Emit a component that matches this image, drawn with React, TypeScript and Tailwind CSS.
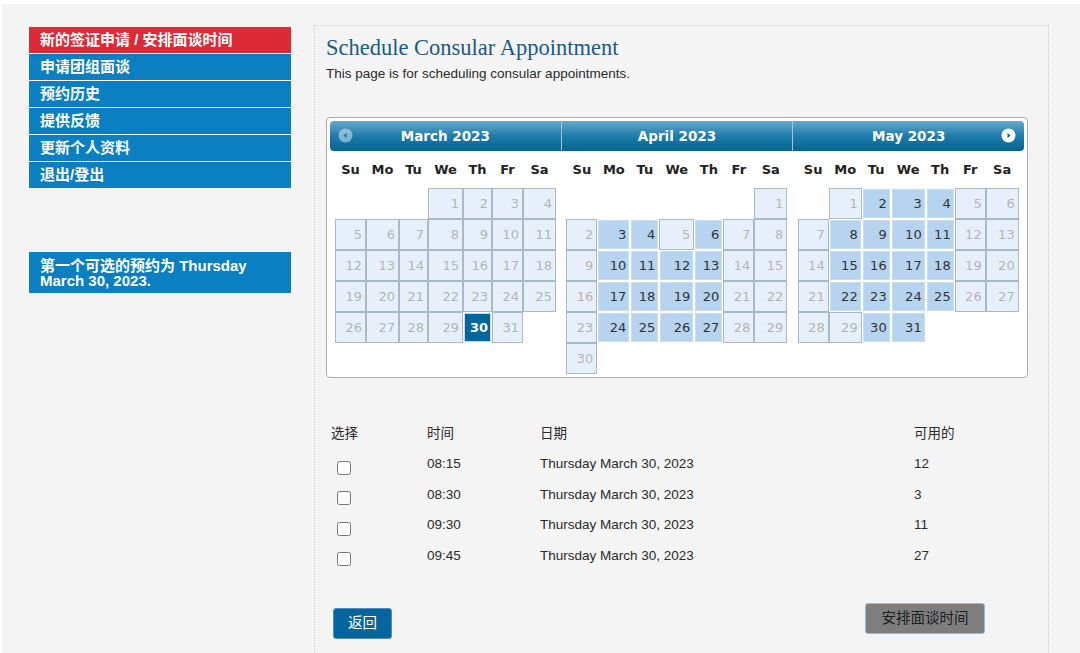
import React from 'react';

type DayState = 'off' | 'on' | 'sel';

interface Month {
  title: string;
  start: number; // weekday of the 1st, 0 = Sunday
  days: number;
  open: number[];
  selected?: number;
}

const COLS = [31, 33, 29, 35, 29, 31, 33];
const DOW = ['Su', 'Mo', 'Tu', 'We', 'Th', 'Fr', 'Sa'];

const MONTHS: Month[] = [
  { title: 'March 2023', start: 3, days: 31, open: [], selected: 30 },
  {
    title: 'April 2023',
    start: 6,
    days: 30,
    open: [3, 4, 6, 10, 11, 12, 13, 17, 18, 19, 20, 24, 25, 26, 27],
  },
  {
    title: 'May 2023',
    start: 1,
    days: 31,
    open: [2, 3, 4, 8, 9, 10, 11, 15, 16, 17, 18, 22, 23, 24, 25, 30, 31],
  },
];

const MENU = ['新的签证申请 / 安排面谈时间', '申请团组面谈', '预约历史', '提供反馈', '更新个人资料', '退出/登出'];

const SLOTS = [
  { time: '08:15', avail: '12' },
  { time: '08:30', avail: '3' },
  { time: '09:30', avail: '11' },
  { time: '09:45', avail: '27' },
];

function Day({ d, state, w }: { d: number; state: DayState; w: number }) {
  if (state === 'off') {
    return (
      <div
        style={{ width: w }}
        className="flex h-[31px] items-center justify-end border border-[#a8bac4] bg-[#e7f0fa] pr-[3px] text-[#b5b5b5]"
      >
        {d}
      </div>
    );
  }
  const inner =
    state === 'sel'
      ? 'border-[#d6d6d6] bg-[#03679c] font-bold text-white'
      : 'border-[#c8ddef] bg-[#b6d4ef] text-[#333]';
  return (
    <div style={{ width: w }} className="h-[31px] p-[1px]">
      <div className={`flex h-full items-center justify-end border pr-[2px] ${inner}`}>{d}</div>
    </div>
  );
}

function MonthGrid({ m }: { m: Month }) {
  const cells: (number | null)[] = [];
  for (let i = 0; i < m.start; i++) cells.push(null);
  for (let d = 1; d <= m.days; d++) cells.push(d);
  while (cells.length % 7) cells.push(null);
  const rows: (number | null)[][] = [];
  for (let i = 0; i < cells.length; i += 7) rows.push(cells.slice(i, i + 7));

  return (
    <div className="flex-1 px-[5px]">
      <div className="flex h-[37px] items-center">
        {DOW.map((n, i) => (
          <div key={n} style={{ width: COLS[i] }} className="text-center text-[13px] font-bold text-[#222]">
            {n}
          </div>
        ))}
      </div>
      {rows.map((r, ri) => (
        <div key={ri} className="flex">
          {r.map((d, i) =>
            d === null ? (
              <div key={i} style={{ width: COLS[i] }} className="h-[31px]" />
            ) : (
              <Day
                key={i}
                d={d}
                w={COLS[i]}
                state={m.selected === d ? 'sel' : m.open.includes(d) ? 'on' : 'off'}
              />
            ),
          )}
        </div>
      ))}
    </div>
  );
}

export default function App() {
  return (
    <div className="h-[653px] w-[1080px] overflow-hidden bg-white pl-[2px] pt-[4px] font-['Liberation_Sans','Noto_Sans_CJK_SC',sans-serif]">
      <div className="flex h-full bg-[#f4f4f4]">
        {/* Sidebar */}
        <aside className="ml-[27px] mt-[23px] w-[262px] shrink-0">
          <div className="flex flex-col gap-[1px] bg-white">
            {MENU.map((t, i) => (
              <div
                key={t}
                className={`flex h-[26px] items-center pl-[11px] text-[15px] font-bold text-white ${
                  i === 0 ? 'bg-[#dc2a36]' : 'bg-[#0a80c2]'
                }`}
              >
                {t}
              </div>
            ))}
          </div>
          <div className="mt-[64px] bg-[#0a80c2] pb-[5px] pl-[11px] pt-[6px] text-[15px] font-bold leading-[15px] text-white">
            第一个可选的预约为 Thursday
            <br />
            March 30, 2023.
          </div>
        </aside>

        {/* Main panel */}
        <main className="ml-[23px] mt-[21px] w-[735px] shrink-0 border-l border-r border-t border-dotted border-[#cfcfcf] pl-[11px] pt-[8px]">
          <h1 className="font-['Liberation_Serif',serif] text-[22.5px] leading-[28px] text-[#1b5a86]">
            Schedule Consular Appointment
          </h1>
          <p className="mt-[4px] text-[13.5px] leading-[16px] text-[#2a2a2a]">
            This page is for scheduling consular appointments.
          </p>

          {/* Calendar */}
          <div className="mt-[35px] w-[702px] rounded-[4px] border border-[#ababab] bg-white p-[3px] font-['DejaVu_Sans',sans-serif] text-[13px]">
            <div className="flex h-[30px] rounded-[4px] bg-gradient-to-b from-[#62abcc] via-[#1d7cab] to-[#006493]">
              {MONTHS.map((m, i) => (
                <div
                  key={m.title}
                  className={`relative flex flex-1 items-center justify-center text-[13.5px] font-bold text-white ${
                    i < 2 ? 'border-r border-[#9cc6dc]' : ''
                  }`}
                >
                  {i === 0 && (
                    <svg className="absolute left-[8px] top-[7px]" width="15" height="15" viewBox="0 0 15 15">
                      <circle cx="7.5" cy="7.5" r="7" fill="#ffffff" fillOpacity="0.45" />
                      <path d="M5.5 7.5 L8.5 4.8 L8.5 10.2 Z" fill="#1f77a6" />
                    </svg>
                  )}
                  {m.title}
                  {i === 2 && (
                    <svg className="absolute right-[8px] top-[7px]" width="15" height="15" viewBox="0 0 15 15">
                      <circle cx="7.5" cy="7.5" r="7" fill="#ffffff" />
                      <path d="M9.5 7.5 L6.5 4.8 L6.5 10.2 Z" fill="#0a6a9c" />
                    </svg>
                  )}
                </div>
              ))}
            </div>
            <div className="flex">
              {MONTHS.map((m) => (
                <MonthGrid key={m.title} m={m} />
              ))}
            </div>
          </div>

          {/* Time slots */}
          <div className="ml-[5px] mt-[41px] text-[13.5px] text-[#2a2a2a]">
            <div className="flex h-[30px] items-center">
              <div className="w-[96px]">选择</div>
              <div className="w-[113px]">时间</div>
              <div className="w-[374px]">日期</div>
              <div>可用的</div>
            </div>
            {SLOTS.map((s) => (
              <div key={s.time} className="flex h-[30.5px] items-center">
                <div className="w-[96px] pl-[6px]">
                  <input type="checkbox" className="m-0 mt-[7px] block h-[14px] w-[14px]" />
                </div>
                <div className="w-[113px]">{s.time}</div>
                <div className="w-[374px]">Thursday March 30, 2023</div>
                <div>{s.avail}</div>
              </div>
            ))}
          </div>

          {/* Buttons */}
          <div className="ml-[7px] mt-[32px] flex w-[652px] items-start justify-between">
            <button className="mt-[5px] h-[31px] w-[59px] rounded-[3px] border border-[#4f8fbb] bg-[#04669c] text-[14.5px] text-white">
              返回
            </button>
            <button className="h-[31px] w-[120px] rounded-[3px] border border-[#93bde0] bg-[#7e7e7e] text-[14.5px] text-[#1e1e1e]">
              安排面谈时间
            </button>
          </div>
        </main>
      </div>
    </div>
  );
}
